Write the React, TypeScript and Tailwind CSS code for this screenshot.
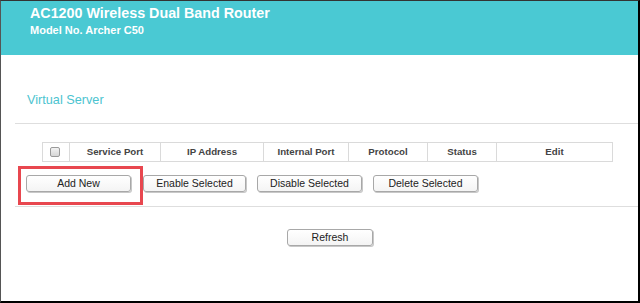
const columns = [
  { label: "Service Port", w: "w-[91px]" },
  { label: "IP Address", w: "w-[103px]" },
  { label: "Internal Port", w: "w-[85px]" },
  { label: "Protocol", w: "w-[79px]" },
  { label: "Status", w: "w-[69px]" },
];

function Btn({ label, className = "" }: { label: string; className?: string }) {
  return (
    <button
      className={`h-[17px] rounded-[3px] border border-[#a8a8a8] bg-gradient-to-b from-white to-[#f4f4f4] shadow-[1px_1px_0_#c8c8c8] text-[10.5px] leading-none text-[#222] ${className}`}
    >
      {label}
    </button>
  );
}

export default function App() {
  return (
    <div
      className="relative w-[640px] h-[303px] overflow-hidden bg-white border-t border-l border-r-2 border-b-2 border-t-[#333] border-l-[#555] border-r-black border-b-black"
      style={{ fontFamily: '"Liberation Sans", Arial, sans-serif' }}
    >
      {/* Header */}
      <div className="h-[54px] bg-[#4ac9d3] pl-[29px] pt-[5px] text-white">
        <div className="text-[14.3px] font-bold leading-none">AC1200 Wireless Dual Band Router</div>
        <div className="mt-[5px] text-[11px] font-bold leading-none">Model No. Archer C50</div>
      </div>

      {/* Title */}
      <div className="pt-[39px] pl-[26px] text-[12.7px] leading-[13px] text-[#4cc4d0]">Virtual Server</div>
      <div className="mt-[16px] ml-[14px] h-px bg-[#dedede]" />

      {/* Table header */}
      <div className="mt-[18px] ml-[41px] flex h-[20px] w-[571px] border border-[#dadada] text-[9.7px] font-bold text-[#444]">
        <div className="flex w-[26px] items-center pl-[7px]">
          <div className="h-[10px] w-[10px] rounded-[2px] border border-[#9a9a9a] bg-gradient-to-b from-[#f2f2f2] to-[#d6d6d6]" />
        </div>
        {columns.map((c) => (
          <div key={c.label} className={`flex ${c.w} items-center justify-center border-l border-[#dadada]`}>
            {c.label}
          </div>
        ))}
        <div className="flex flex-1 items-center justify-center border-l border-[#dadada]">Edit</div>
      </div>

      {/* Actions */}
      <div className="mt-[13px] flex">
        <Btn label="Add New" className="ml-[25px] w-[105px]" />
        <Btn label="Enable Selected" className="ml-[12px] w-[103px]" />
        <Btn label="Disable Selected" className="ml-[11px] w-[105px]" />
        <Btn label="Delete Selected" className="ml-[11px] w-[105px]" />
      </div>
      <div className="mt-[14px] ml-[14px] h-px bg-[#dedede]" />

      <div className="mt-[22px] flex">
        <Btn label="Refresh" className="ml-[286px] w-[86px] h-[16px]" />
      </div>

      {/* Highlight annotation */}
      <div className="absolute left-[17px] top-[165px] h-[39px] w-[125px] border-[3px] border-[#e8474f]" />
    </div>
  );
}
